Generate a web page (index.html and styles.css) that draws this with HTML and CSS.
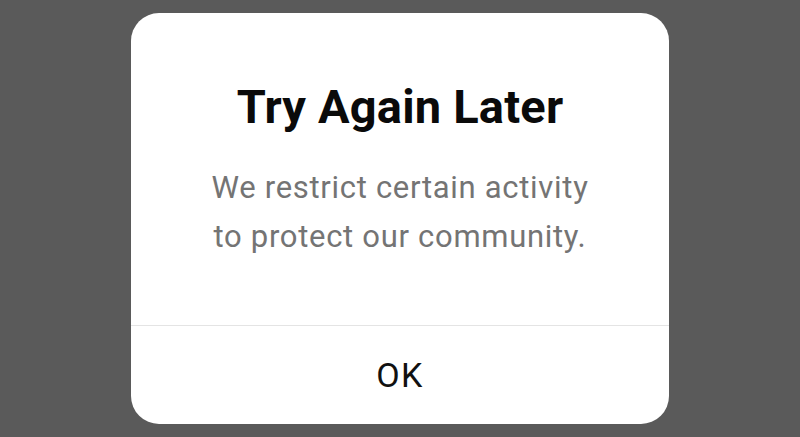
FILE: index.html
```html
<!DOCTYPE html>
<html>
<head>
<meta charset="utf-8">
<link rel="stylesheet" href="styles.css">
</head>
<body>
<div class="dialog">
  <div class="content">
    <h1 class="title">Try Again Later</h1>
    <p class="message">We restrict certain activity<br>to protect our community.</p>
  </div>
  <div class="actions">
    <button class="ok">OK</button>
  </div>
</div>
</body>
</html>
```
FILE: styles.css
```css
html, body {
  margin: 0;
  padding: 0;
}
body {
  background: #5a5a5a;
  width: 800px;
  height: 437px;
  overflow: hidden;
  font-family: Roboto, "Liberation Sans", sans-serif;
  display: flex;
  justify-content: center;
  align-items: flex-start;
}
.dialog {
  margin-top: 13px;
  width: 538px;
  height: 411px;
  background: #fff;
  border-radius: 28px;
  display: flex;
  flex-direction: column;
}
.content {
  padding-top: 67px;
  padding-bottom: 64px;
  text-align: center;
  border-bottom: 1px solid #e4e4e4;
}
.title {
  margin: 0;
  font-size: 47px;
  line-height: 54px;
  font-weight: 700;
  letter-spacing: 0.2px;
  color: #0a0a0a;
}
.message {
  margin: 29px 0 0;
  font-size: 31px;
  line-height: 49px;
  letter-spacing: 0.7px;
  color: #747474;
}
.actions {
  flex: 1;
  display: flex;
}
.ok {
  flex: 1;
  border: none;
  background: transparent;
  font-family: Roboto, "Liberation Sans", sans-serif;
  font-size: 34px;
  line-height: 98px;
  letter-spacing: 1.5px;
  color: #111;
  padding: 0;
}
```
